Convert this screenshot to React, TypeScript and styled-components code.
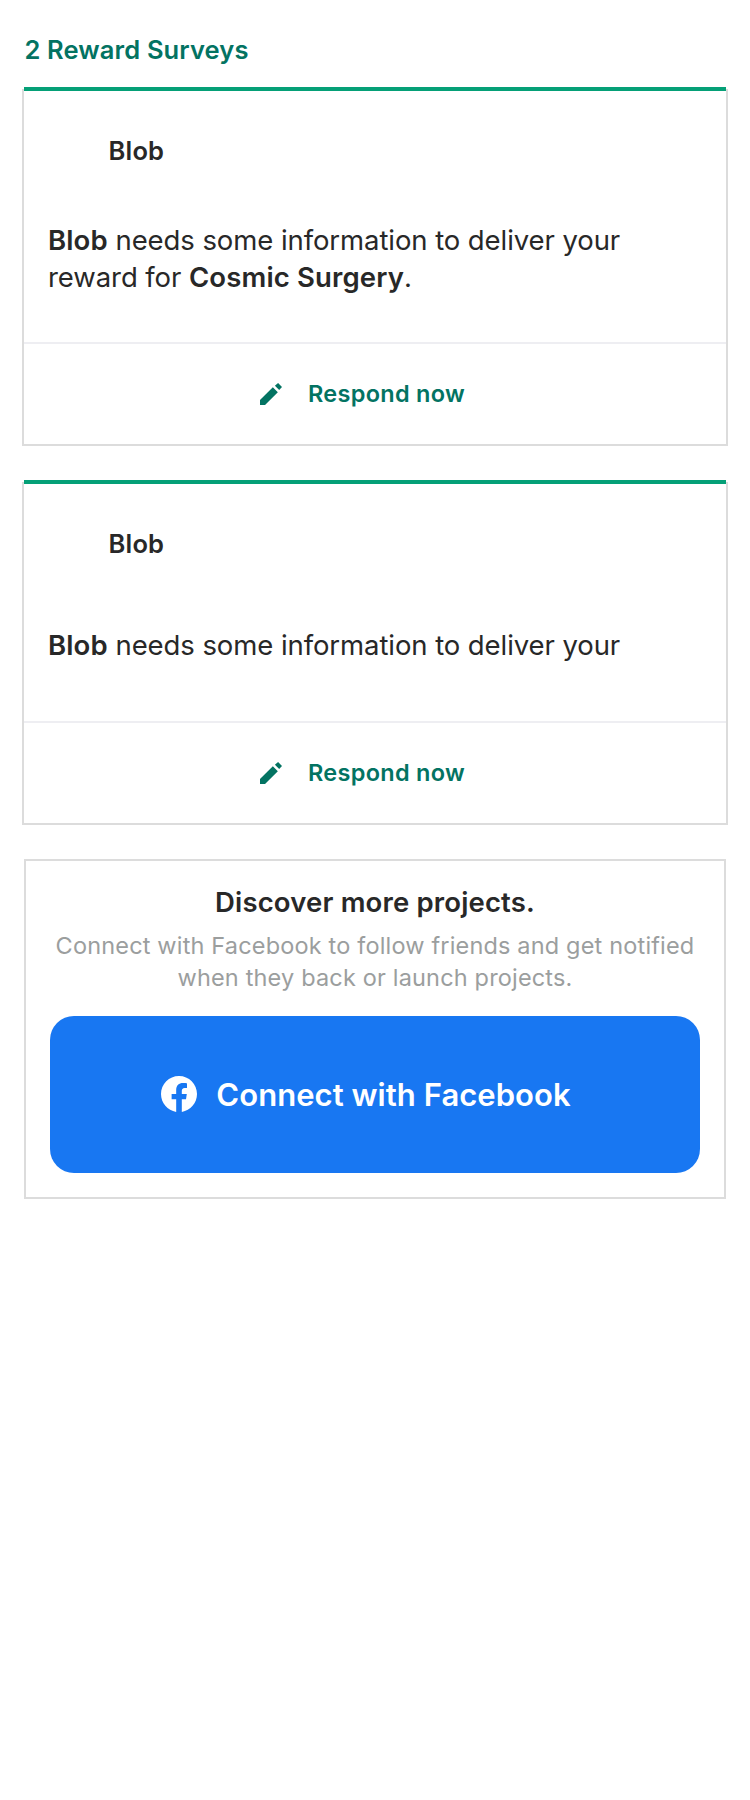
import React from "react";
import styled, { createGlobalStyle } from "styled-components";

const GlobalStyle = createGlobalStyle`
  * { box-sizing: border-box; }
  body {
    margin: 0;
    background: #ffffff;
    color: #282828;
    font-family: Inter, "Liberation Sans", sans-serif;
  }
  h1, h2, h3, p { margin: 0; }
`;

const Page = styled.main`
  min-height: 1800px;
  padding: 34px 22px 0;
  background: #ffffff;
`;

const SectionTitle = styled.h1`
  padding-left: 2.5px;
  font-size: 25.5px;
  font-weight: 600;
  line-height: 32px;
  letter-spacing: 0.13px;
  color: #037362;
`;

const SurveyList = styled.section`
  display: flex;
  flex-direction: column;
  gap: 34px;
  margin-top: 21px;
`;

const Survey = styled.article`
  display: flex;
  flex-direction: column;
`;

const AccentBar = styled.div`
  height: 4px;
  margin: 0 2px -2px;
  background: #05a077;
`;

const SurveyBody = styled.div`
  border: 2px solid #dcdcdc;
  border-top: 0;
`;

const Creator = styled.h2`
  padding: 46px 24px 0 84.5px;
  font-size: 25.5px;
  font-weight: 600;
  line-height: 32px;
  letter-spacing: 0.2px;
`;

const Message = styled.p<{ $top: number; $bottom: number }>`
  padding: ${(p) => `${p.$top}px 24px ${p.$bottom}px 24px`};
  font-size: 27.5px;
  line-height: 37px;
  letter-spacing: -0.08px;

  strong {
    font-weight: 600;
    letter-spacing: 0.15px;
  }
`;

const RespondButton = styled.button`
  display: flex;
  align-items: center;
  justify-content: center;
  gap: 26px;
  width: 100%;
  height: 102px;
  padding: 0 25px 2px 0;
  border: 0;
  border-top: 2px solid #eeeef2;
  background: transparent;
  color: #037362;
  font-family: inherit;
  font-size: 23.5px;
  font-weight: 600;
  letter-spacing: 0.29px;

  svg { margin-top: 2px; }
`;

const DiscoverCard = styled.section`
  display: flex;
  flex-direction: column;
  margin: 34px 2px 0;
  padding: 24px;
  border: 2px solid #dcdcdc;
  text-align: center;
`;

const DiscoverTitle = styled.h3`
  font-size: 27.5px;
  font-weight: 600;
  line-height: 34px;
  letter-spacing: 0.16px;
`;

const DiscoverText = styled.p`
  margin-top: 11px;
  font-size: 23.5px;
  line-height: 32px;
  letter-spacing: 0.17px;
  color: #9b9e9e;
`;

const FacebookButton = styled.button`
  display: flex;
  align-items: center;
  justify-content: center;
  gap: 19px;
  height: 157px;
  margin-top: 22px;
  padding: 0 18px 0 0;
  border: 0;
  border-radius: 24px;
  background: #1877f2;
  color: #ffffff;
  font-family: inherit;
  font-size: 31px;
  font-weight: 600;
  letter-spacing: 0.05px;

  svg { margin-bottom: 1px; }
`;

const PencilIcon = () => (
  <svg width="22" height="22" viewBox="3 3 18 18" fill="currentColor" aria-hidden="true">
    <path d="M3 17V21h4.1L17.6 10.5l-4.1-4.1L3 17zM17.8 3L21 6.3l-2.3 2.4-3.5-3.4L17.8 3z" />
  </svg>
);

const FacebookIcon = () => (
  <svg width="36" height="36" viewBox="0 0 24 24" fill="currentColor" aria-hidden="true">
    <path d="M24 12.07C24 5.4 18.63 0 12 0S0 5.4 0 12.07C0 18.1 4.39 23.1 10.13 24v-8.44H7.08v-3.49h3.04V9.41c0-3.02 1.79-4.69 4.53-4.69 1.31 0 2.68.24 2.68.24v2.97h-1.51c-1.49 0-1.95.93-1.95 1.89v2.25h3.33l-.53 3.49h-2.8V24C19.61 23.1 24 18.1 24 12.07z" />
  </svg>
);

type SurveyCardProps = {
  creator: string;
  top: number;
  bottom: number;
  project?: string;
};

const SurveyCard = ({ creator, top, bottom, project }: SurveyCardProps) => (
  <Survey>
    <AccentBar />
    <SurveyBody>
      <Creator>{creator}</Creator>
      <Message $top={top} $bottom={bottom}>
        <strong>{creator}</strong> needs some information to deliver your
        {project && (
          <>
            <br />
            reward for <strong>{project}</strong>.
          </>
        )}
      </Message>
      <RespondButton>
        <PencilIcon />
        Respond now
      </RespondButton>
    </SurveyBody>
  </Survey>
);

export default function App() {
  return (
    <>
      <GlobalStyle />
      <Page>
        <SectionTitle>2 Reward Surveys</SectionTitle>
        <SurveyList>
          <SurveyCard creator="Blob" top={55} bottom={46} project="Cosmic Surgery" />
          <SurveyCard creator="Blob" top={67} bottom={57} />
        </SurveyList>
        <DiscoverCard>
          <DiscoverTitle>Discover more projects.</DiscoverTitle>
          <DiscoverText>
            Connect with Facebook to follow friends and get notified
            <br />
            when they back or launch projects.
          </DiscoverText>
          <FacebookButton>
            <FacebookIcon />
            Connect with Facebook
          </FacebookButton>
        </DiscoverCard>
      </Page>
    </>
  );
}
